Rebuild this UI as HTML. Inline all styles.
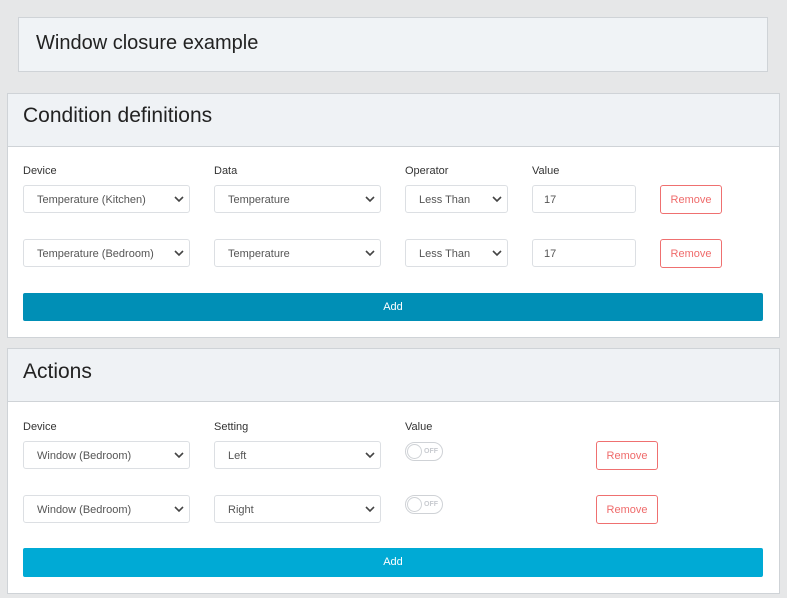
<html><head><style>
body{margin:0;width:787px;height:598px;background:#e6e7e8;font-family:"Liberation Sans",sans-serif;position:relative;overflow:hidden}
.a{position:absolute;box-sizing:border-box}
.card{background:#fff;border:1px solid #cfd3d7}
.hd{background:#eff2f5;border-bottom:1px solid #cfd3d7;color:#222}
.lb{font-size:11px;color:#333}
.sel{border:1px solid #dcdfe3;border-radius:3px;background:#fff;font-size:11px;color:#555;padding:8px 0 0 13px}
.sel svg{position:absolute;right:5px;top:10px}
.rm{border:1px solid #ef7070;border-radius:3px;color:#ef6b6b;font-size:11px;text-align:center;padding-top:8px;background:#fff}
.add{color:#fff;font-size:11px;text-align:center;padding-top:8px;border-radius:2px}
.tg{width:38px;height:19px;border:1px solid #cfd2d6;border-radius:10px}
.tg:before{content:"";position:absolute;left:1px;top:1px;width:15px;height:15px;border:1px solid #cfd2d6;border-radius:50%;box-sizing:border-box}
.tg span{position:absolute;left:18px;top:5px;font-size:7px;color:#c8cbd0;font-weight:bold}
</style></head><body>
<div class="a card" style="left:18px;top:17px;width:750px;height:55px;background:#f0f3f6"></div>
<div class="a" style="left:36px;top:32px;font-size:20px;color:#222">Window closure example</div>

<div class="a card" style="left:7px;top:93px;width:773px;height:245px"></div>
<div class="a hd" style="left:8px;top:94px;width:771px;height:53px"></div>
<div class="a" style="left:23px;top:104px;font-size:21px;color:#222">Condition definitions</div>

<div class="a card" style="left:7px;top:348px;width:773px;height:246px"></div>
<div class="a hd" style="left:8px;top:349px;width:771px;height:53px"></div>
<div class="a" style="left:23px;top:360px;font-size:21px;color:#222">Actions</div>

<div class="a lb" style="left:23px;top:165px">Device</div>
<div class="a lb" style="left:214px;top:165px">Data</div>
<div class="a lb" style="left:405px;top:165px">Operator</div>
<div class="a lb" style="left:532px;top:165px">Value</div>

<div class="a sel" style="left:23px;top:185px;width:167px;height:28px">Temperature (Kitchen)<svg width="10" height="7"><path d="M1 1L5 5L9 1" stroke="#444" stroke-width="1.6" fill="none"/></svg></div>
<div class="a sel" style="left:214px;top:185px;width:167px;height:28px">Temperature<svg width="10" height="7"><path d="M1 1L5 5L9 1" stroke="#444" stroke-width="1.6" fill="none"/></svg></div>
<div class="a sel" style="left:405px;top:185px;width:103px;height:28px">Less Than<svg width="10" height="7"><path d="M1 1L5 5L9 1" stroke="#444" stroke-width="1.6" fill="none"/></svg></div>
<div class="a sel" style="left:532px;top:185px;width:104px;height:28px;padding-left:11px">17</div>
<div class="a rm" style="left:660px;top:185px;width:62px;height:29px">Remove</div>

<div class="a sel" style="left:23px;top:239px;width:167px;height:28px">Temperature (Bedroom)<svg width="10" height="7"><path d="M1 1L5 5L9 1" stroke="#444" stroke-width="1.6" fill="none"/></svg></div>
<div class="a sel" style="left:214px;top:239px;width:167px;height:28px">Temperature<svg width="10" height="7"><path d="M1 1L5 5L9 1" stroke="#444" stroke-width="1.6" fill="none"/></svg></div>
<div class="a sel" style="left:405px;top:239px;width:103px;height:28px">Less Than<svg width="10" height="7"><path d="M1 1L5 5L9 1" stroke="#444" stroke-width="1.6" fill="none"/></svg></div>
<div class="a sel" style="left:532px;top:239px;width:104px;height:28px;padding-left:11px">17</div>
<div class="a rm" style="left:660px;top:239px;width:62px;height:29px">Remove</div>

<div class="a add" style="left:23px;top:293px;width:740px;height:28px;background:#008fb6">Add</div>

<div class="a lb" style="left:23px;top:421px">Device</div>
<div class="a lb" style="left:214px;top:421px">Setting</div>
<div class="a lb" style="left:405px;top:421px">Value</div>

<div class="a sel" style="left:23px;top:441px;width:167px;height:28px">Window (Bedroom)<svg width="10" height="7"><path d="M1 1L5 5L9 1" stroke="#444" stroke-width="1.6" fill="none"/></svg></div>
<div class="a sel" style="left:214px;top:441px;width:167px;height:28px">Left<svg width="10" height="7"><path d="M1 1L5 5L9 1" stroke="#444" stroke-width="1.6" fill="none"/></svg></div>
<div class="a tg" style="left:405px;top:442px"><span>OFF</span></div>
<div class="a rm" style="left:596px;top:441px;width:62px;height:29px">Remove</div>

<div class="a sel" style="left:23px;top:495px;width:167px;height:28px">Window (Bedroom)<svg width="10" height="7"><path d="M1 1L5 5L9 1" stroke="#444" stroke-width="1.6" fill="none"/></svg></div>
<div class="a sel" style="left:214px;top:495px;width:167px;height:28px">Right<svg width="10" height="7"><path d="M1 1L5 5L9 1" stroke="#444" stroke-width="1.6" fill="none"/></svg></div>
<div class="a tg" style="left:405px;top:495px"><span>OFF</span></div>
<div class="a rm" style="left:596px;top:495px;width:62px;height:29px">Remove</div>

<div class="a add" style="left:23px;top:548px;width:740px;height:29px;background:#00aad5">Add</div>
</body></html>
